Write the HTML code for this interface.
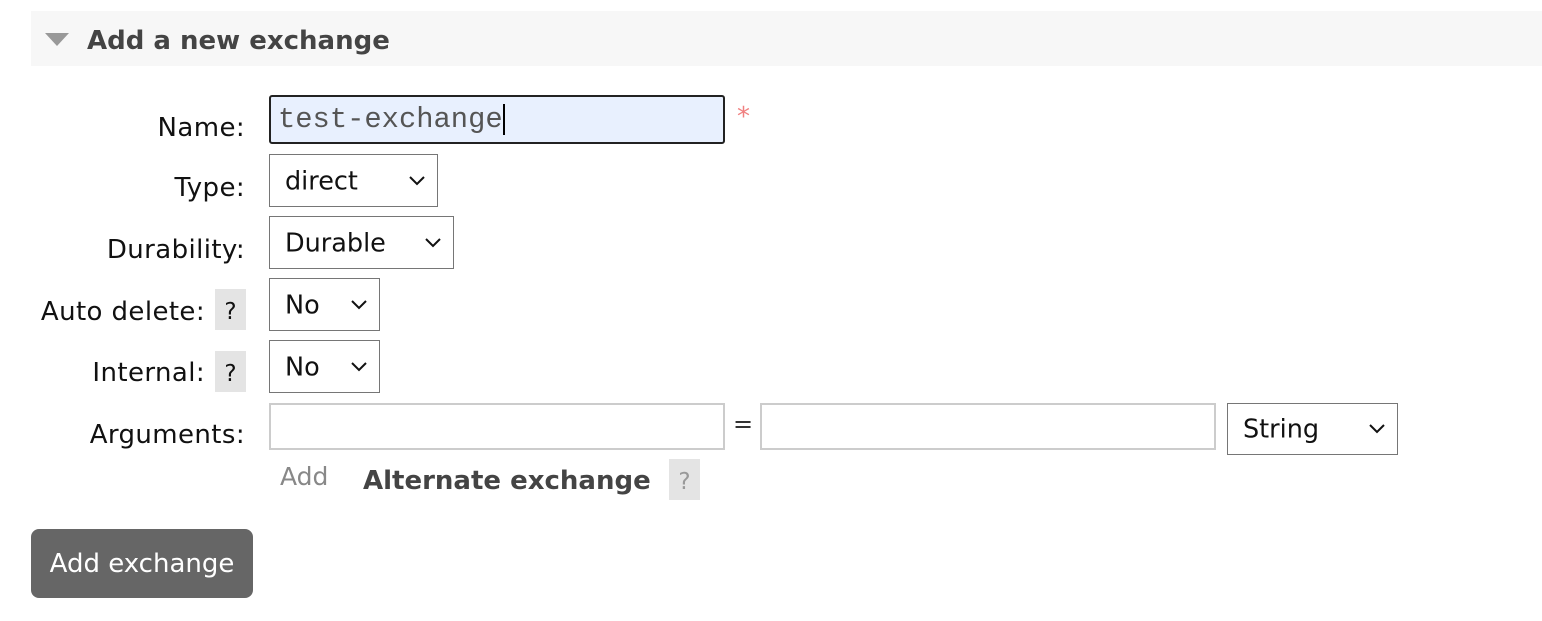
<!DOCTYPE html>
<html><head><style>
body{margin:0;width:1542px;height:621px;background:#fff;font-family:"DejaVu Sans","Liberation Sans",sans-serif;position:relative;overflow:hidden;color:#111}
.a{position:absolute;white-space:nowrap}
.lbl{position:absolute;right:1297px;font-size:26px;letter-spacing:0.4px;line-height:30px;text-align:right;color:#111}
.sel{position:absolute;border:1px solid #767676;background:#fff;box-sizing:border-box;font-size:25.5px}
.sel span{position:absolute;left:15px;top:50%;transform:translateY(-48%)}
.sel svg{position:absolute;right:12px;top:50%;margin-top:-5px}
.q{position:absolute;background:#e4e4e4;width:31px;height:41px;font-size:23px;text-align:center;line-height:46px}
</style></head><body>
<div class="a" style="left:31px;top:11px;width:1511px;height:55px;background:#f7f7f7"></div>
<svg class="a" style="left:45px;top:33px" width="24" height="14"><polygon points="0,0 24,0 12,13" fill="#999"/></svg>
<div class="a" style="left:87px;top:24px;font-size:26px;font-weight:bold;color:#444;line-height:34px">Add a new exchange</div>

<div class="lbl" style="top:113px">Name:</div>
<div class="a" style="left:269px;top:95px;width:456px;height:49px;box-sizing:border-box;border:2px solid #222;border-radius:3px;background:#e8f0fe"></div>
<div class="a" style="left:278px;top:103px;font-family:'Liberation Mono',monospace;font-size:28.8px;color:#555;line-height:34px">test-exchange</div>
<div class="a" style="left:503px;top:104px;width:2px;height:31px;background:#000"></div>
<div class="a" style="left:737px;top:102px;font-size:26px;color:#f08080">*</div>

<div class="lbl" style="top:173px">Type:</div>
<div class="sel" style="left:269px;top:154px;width:169px;height:53px"><span>direct</span><svg width="16" height="10"><polyline points="1,1 8,8 15,1" fill="none" stroke="#111" stroke-width="2"/></svg></div>

<div class="lbl" style="top:235px">Durability:</div>
<div class="sel" style="left:269px;top:216px;width:185px;height:53px"><span>Durable</span><svg width="16" height="10"><polyline points="1,1 8,8 15,1" fill="none" stroke="#111" stroke-width="2"/></svg></div>

<div class="lbl" style="top:297px;right:1337px">Auto delete:</div>
<div class="q" style="left:215px;top:289px">?</div>
<div class="sel" style="left:269px;top:278px;width:111px;height:53px"><span>No</span><svg width="16" height="10"><polyline points="1,1 8,8 15,1" fill="none" stroke="#111" stroke-width="2"/></svg></div>

<div class="lbl" style="top:358px;right:1337px">Internal:</div>
<div class="q" style="left:215px;top:351px">?</div>
<div class="sel" style="left:269px;top:340px;width:111px;height:53px"><span>No</span><svg width="16" height="10"><polyline points="1,1 8,8 15,1" fill="none" stroke="#111" stroke-width="2"/></svg></div>

<div class="lbl" style="top:420px">Arguments:</div>
<div class="a" style="left:269px;top:403px;width:456px;height:47px;box-sizing:border-box;border:2px solid #ccc"></div>
<div class="a" style="left:733px;top:410px;font-size:24px;color:#333">=</div>
<div class="a" style="left:760px;top:403px;width:456px;height:47px;box-sizing:border-box;border:2px solid #ccc"></div>
<div class="sel" style="left:1227px;top:403px;width:171px;height:52px"><span>String</span><svg width="16" height="10"><polyline points="1,1 8,8 15,1" fill="none" stroke="#111" stroke-width="2"/></svg></div>

<div class="a" style="left:280px;top:462px;font-size:25px;color:#888">Add</div>
<div class="a" style="left:363px;top:466px;font-size:26px;font-weight:bold;color:#444">Alternate exchange</div>
<div class="q" style="left:669px;top:459px;color:#999">?</div>

<div class="a" style="left:31px;top:529px;width:222px;height:69px;background:#666;border-radius:8px;color:#fff;font-size:26px;text-align:center;line-height:70px">Add exchange</div>
</body></html>
